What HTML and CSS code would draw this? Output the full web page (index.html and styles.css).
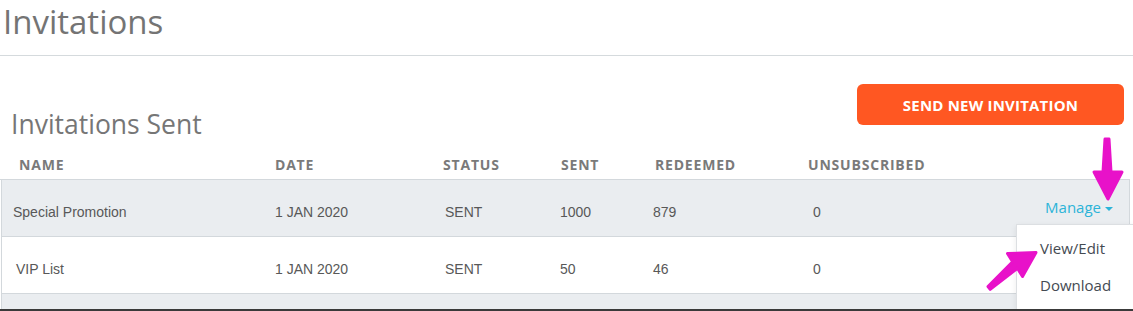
FILE: index.html
```html
<!DOCTYPE html>
<html lang="en">
<head>
<meta charset="utf-8">
<title>Invitations</title>
<link rel="stylesheet" href="styles.css">
</head>
<body>
<div class="page">
  <h1 class="title">Invitations</h1>
  <div class="divider"></div>

  <div class="sent-head">
    <h2 class="subtitle">Invitations Sent</h2>
    <button class="btn-primary" type="button">SEND NEW INVITATION</button>
  </div>

  <div class="table">
    <div class="thead">
      <div>NAME</div>
      <div>DATE</div>
      <div>STATUS</div>
      <div>SENT</div>
      <div>REDEEMED</div>
      <div>UNSUBSCRIBED</div>
    </div>

    <div class="row row-gray">
      <div class="cell c-name">Special Promotion</div>
      <div class="cell c-date">1 JAN 2020</div>
      <div class="cell c-status">SENT</div>
      <div class="cell c-sent">1000</div>
      <div class="cell c-red">879</div>
      <div class="cell c-unsub">0</div>
      <div class="cell c-action">
        <div class="manage">
          <span class="manage-link">Manage</span><span class="caret"></span>
          <ul class="dropdown">
            <li>View/Edit</li>
            <li>Download</li>
          </ul>
        </div>
      </div>
    </div>

    <div class="row">
      <div class="cell c-name c-name-vip">VIP List</div>
      <div class="cell c-date">1 JAN 2020</div>
      <div class="cell c-status">SENT</div>
      <div class="cell c-sent">50</div>
      <div class="cell c-red">46</div>
      <div class="cell c-unsub">0</div>
      <div class="cell c-action"></div>
    </div>

    <div class="row row-gray"></div>
  </div>

  <svg class="arrows" width="1133" height="311" viewBox="0 0 1133 311">
    <polygon class="arrow" points="1105,139 1109,139 1111,172 1122,172 1108,199 1094,172 1103,172"/>
    <polygon class="arrow" points="988,286.6 1012.6,261.8 1007.5,253.5 1036,252.5 1022.5,276.5 1017.4,268.2 990.2,289.4"/>
  </svg>
</div>
</body>
</html>
```

FILE: styles.css
```css
html, body {
  margin: 0;
  padding: 0;
}

body {
  background: #3a3a3a;
  font-family: "Open Sans", "Liberation Sans", sans-serif;
}

.page {
  position: relative;
  height: 309px;
  overflow: hidden;
  background: #ffffff;
}

.title {
  margin: 0;
  padding-left: 3px;
  font-size: 33px;
  line-height: 44px;
  font-weight: 400;
  color: #747474;
}

.divider {
  margin-top: 11px;
  height: 1px;
  background: #d5dadd;
}

.sent-head {
  display: flex;
  justify-content: space-between;
  align-items: flex-end;
  margin-top: 28px;
  padding: 0 9px 0 11px;
  height: 56px;
}

.subtitle {
  margin: 0;
  font-size: 26.5px;
  line-height: 32px;
  font-weight: 400;
  color: #767676;
}

.btn-primary {
  align-self: flex-start;
  width: 267px;
  height: 41px;
  border: 0;
  border-radius: 6px;
  background: #ff5722;
  color: #ffffff;
  font-family: "Open Sans", "Liberation Sans", sans-serif;
  font-weight: 700;
  font-size: 15px;
  letter-spacing: 0.2px;
  padding: 0;
}

.table {
  margin-right: 3px;
}

.thead {
  display: grid;
  grid-template-columns: 256px 168px 118px 94px 153px 1fr;
  padding: 15px 0 4px 19px;
  border-bottom: 1px solid #d3d8dc;
  font-size: 14px;
  line-height: 20px;
  font-weight: 700;
  letter-spacing: 0.8px;
  color: #7a7a7a;
}

.row {
  display: grid;
  grid-template-columns: 262px 168px 118px 94px 153px 1fr auto;
  height: 56px;
  margin-left: 1px;
  padding: 0 16px 0 11px;
  border-left: 1px solid #d3d8dc;
  border-right: 1px solid #d3d8dc;
  border-bottom: 1px solid #d3d8dc;
  background: #ffffff;
}

.row-gray {
  background: #eaedf0;
}

.cell {
  padding-top: 22px;
  font-family: "Liberation Sans", Arial, sans-serif;
  font-size: 14px;
  line-height: 20px;
  color: #585858;
}

.c-name-vip { padding-left: 3px; }
.c-status { padding-left: 2px; }
.c-sent { margin-left: -1px; }
.c-red { margin-left: -2px; }
.c-unsub { padding-left: 5px; }

.c-action {
  padding-top: 17px;
}

.manage {
  position: relative;
  font-family: "Open Sans", "Liberation Sans", sans-serif;
  font-size: 15px;
  line-height: 20px;
  color: #2cb4d8;
  white-space: nowrap;
}

.caret {
  display: inline-block;
  width: 0;
  height: 0;
  margin-left: 4px;
  border-left: 4px solid transparent;
  border-right: 4px solid transparent;
  border-top: 4px solid #2cb4d8;
  vertical-align: middle;
}

.dropdown {
  position: absolute;
  top: 27px;
  left: -29px;
  width: 140px;
  margin: 0;
  padding: 5px 0;
  list-style: none;
  background: #ffffff;
  border: 1px solid #dcdfe2;
  box-shadow: 0 2px 6px rgba(0, 0, 0, 0.08);
  z-index: 2;
}

.dropdown li {
  padding: 8px 23px 9px;
  font-size: 15px;
  line-height: 20px;
  color: #444a52;
}

.arrows {
  position: absolute;
  top: 0;
  left: 0;
  pointer-events: none;
  z-index: 3;
}

.arrow {
  fill: #e812c9;
  stroke: #e812c9;
  stroke-width: 3;
  stroke-linejoin: round;
}
```
